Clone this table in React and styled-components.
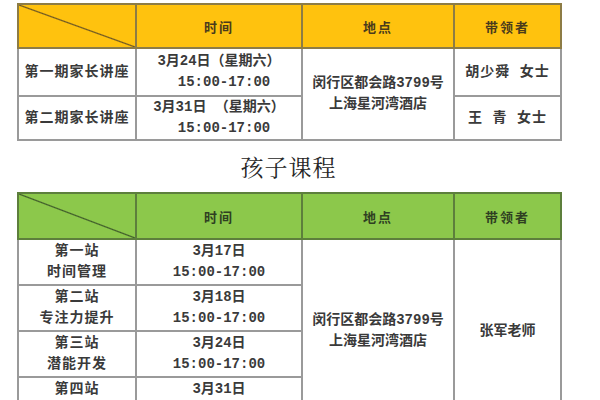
import React from "react";
import styled, { createGlobalStyle } from "styled-components";

const GlobalStyle = createGlobalStyle`
    body {
        margin: 0;
        background: #ffffff;
        font-family: "Liberation Mono", "Noto Sans CJK SC", monospace;
    }
`;

const Page = styled.div`
    width: 600px;
    height: 400px;
    overflow: hidden;
    padding: 3px 0 0 17px;
    box-sizing: border-box;
`;

const Table = styled.table`
    border-collapse: collapse;
    table-layout: fixed;
    width: 543px;
    border: 2px solid #8f8f8f;
`;

const Col = styled.col`
    width: ${(p) => p.$w}px;
`;

const HeadRow = styled.tr`
    height: ${(p) => p.$h}px;
    background: ${(p) => p.$bg};
`;

const Row = styled.tr`
    height: ${(p) => p.$h}px;
`;

const Corner = styled.th`
    padding: 0;
    border: 2px solid ${(p) => p.$line};
    background: linear-gradient(
        to top right,
        transparent calc(50% - 1.2px),
        ${(p) => p.$diag} 50%,
        transparent calc(50% + 1.2px)
    );
`;

const HeadCell = styled.th`
    padding: 0;
    border: 2px solid ${(p) => p.$line};
    font-family: "Noto Sans CJK SC", sans-serif;
    font-size: 13px;
    font-weight: 700;
    letter-spacing: 2px;
    color: ${(p) => p.$color};
`;

const Cell = styled.td`
    padding: 0;
    border: 2px solid #9a9a9a;
    text-align: center;
    vertical-align: middle;
    font-size: 14px;
    font-weight: 700;
    line-height: 21px;
    color: #3a3a3a;
    letter-spacing: ${(p) => (p.$spaced ? "1px" : "0")};
`;

const Line = styled.div`
    white-space: pre;
    padding-left: ${(p) => p.$indent || 0}px;
`;

const Title = styled.h2`
    margin: 0;
    width: 543px;
    height: 51px;
    display: flex;
    align-items: center;
    justify-content: center;
    font-family: "Noto Serif CJK SC", "Noto Sans CJK SC", serif;
    font-weight: 400;
    font-size: 23px;
    letter-spacing: 1px;
    color: #262626;
`;

const orange = { bg: "#ffc20e", line: "#8d7c45", diag: "#6b5524", color: "#4a3b1c" };
const green = { bg: "#8cc84b", line: "#5d7f3c", diag: "#3e5a2a", color: "#2f3f22" };

function Columns() {
    return (
        <colgroup>
            <Col $w={118} />
            <Col $w={166} />
            <Col $w={152} />
            <Col $w={107} />
        </colgroup>
    );
}

function Header({ theme, h }) {
    return (
        <HeadRow $h={h} $bg={theme.bg}>
            <Corner $line={theme.line} $diag={theme.diag} />
            <HeadCell $line={theme.line} $color={theme.color}>时间</HeadCell>
            <HeadCell $line={theme.line} $color={theme.color}>地点</HeadCell>
            <HeadCell $line={theme.line} $color={theme.color}>带领者</HeadCell>
        </HeadRow>
    );
}

const stations = [
    ["第一站", "时间管理", "3月17日"],
    ["第二站", "专注力提升", "3月18日"],
    ["第三站", "潜能开发", "3月24日"],
    ["第四站", "情商培养", "3月31日"],
];

export default function App() {
    return (
        <Page>
            <GlobalStyle />
            <Table>
                <Columns />
                <thead>
                    <Header theme={orange} h={44} />
                </thead>
                <tbody>
                    <Row $h={48}>
                        <Cell $spaced>第一期家长讲座</Cell>
                        <Cell>
                            <Line>3月24日（星期六）</Line>
                            <Line $indent={10}>15:00-17:00</Line>
                        </Cell>
                        <Cell rowSpan={2}>
                            <Line>闵行区都会路3799号</Line>
                            <Line>上海星河湾酒店</Line>
                        </Cell>
                        <Cell $spaced>胡少舜  女士</Cell>
                    </Row>
                    <Row $h={44}>
                        <Cell $spaced>第二期家长讲座</Cell>
                        <Cell>
                            <Line>3月31日 （星期六）</Line>
                            <Line $indent={10}>15:00-17:00</Line>
                        </Cell>
                        <Cell $spaced>王 青  女士</Cell>
                    </Row>
                </tbody>
            </Table>
            <Title>孩子课程</Title>
            <Table>
                <Columns />
                <thead>
                    <Header theme={green} h={46} />
                </thead>
                <tbody>
                    {stations.map(([stop, topic, date], i) => (
                        <Row $h={46} key={stop}>
                            <Cell $spaced>
                                <Line>{stop}</Line>
                                <Line>{topic}</Line>
                            </Cell>
                            <Cell>
                                <Line>{date}</Line>
                                <Line>15:00-17:00</Line>
                            </Cell>
                            {i === 0 && (
                                <>
                                    <Cell rowSpan={4}>
                                        <Line>闵行区都会路3799号</Line>
                                        <Line>上海星河湾酒店</Line>
                                    </Cell>
                                    <Cell rowSpan={4}>张军老师</Cell>
                                </>
                            )}
                        </Row>
                    ))}
                </tbody>
            </Table>
        </Page>
    );
}
